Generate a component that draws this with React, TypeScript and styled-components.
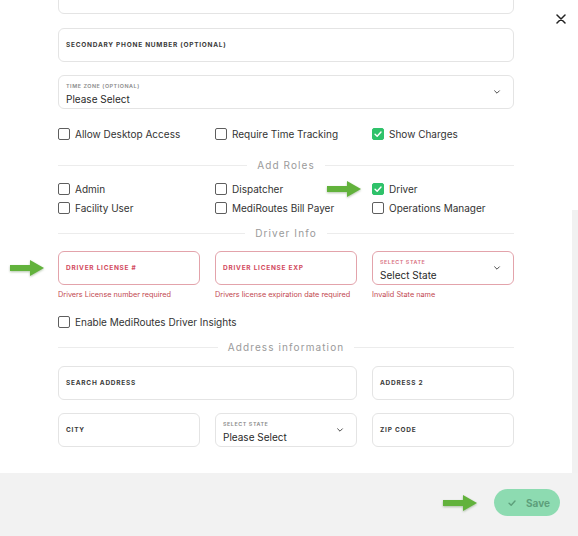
import React, { FunctionComponent } from "react";
import styled, { createGlobalStyle } from "styled-components";

const GlobalStyle = createGlobalStyle`
  html, body {
    margin: 0;
    padding: 0;
    background: #fff;
  }
  body {
    font-family: Inter, "Noto Sans", "Liberation Sans", sans-serif;
    color: #2f2f2f;
  }
`;

const Page = styled.div`
  position: relative;
  width: 578px;
  height: 536px;
  display: flex;
  flex-direction: column;
  overflow: hidden;
  background: #fff;
`;

const Body = styled.div`
  flex: 1;
  overflow: hidden;
  padding-left: 58px;
`;

const Form = styled.div`
  width: 456px;
  display: flex;
  flex-direction: column;
  margin-top: -20px;
`;

const Field = styled.div<{ error?: boolean; top?: number }>`
  box-sizing: border-box;
  height: 34px;
  margin-top: ${(p) => p.top ?? 0}px;
  border: 1px solid ${(p) => (p.error ? "#e3a3ab" : "#e4e4e4")};
  border-radius: 6px;
  background: #fff;
  display: flex;
  align-items: center;
  padding: 0 7px;
  position: relative;
`;

const FieldLabel = styled.span<{ error?: boolean }>`
  font-size: 6.5px;
  font-weight: 700;
  letter-spacing: 0.75px;
  text-transform: uppercase;
  color: ${(p) => (p.error ? "#d24a5e" : "#3a3a3a")};
`;

const SelectBody = styled.div`
  display: flex;
  flex-direction: column;
  flex: 1;
  gap: 4px;
  padding-top: 3px;
`;

const SmallLabel = styled.span<{ error?: boolean }>`
  font-size: 5.4px;
  font-weight: 600;
  letter-spacing: 0.55px;
  text-transform: uppercase;
  color: ${(p) => (p.error ? "#d8707f" : "#8a8a8a")};
`;

const SelectValue = styled.span`
  font-size: 10px;
  color: #2a2a2a;
`;

const Chevron = styled.svg`
  width: 8px;
  height: 8px;
  margin-right: 5px;
  flex-shrink: 0;
`;

const Grid = styled.div<{ top: number; rowGap?: number; wide?: boolean }>`
  display: grid;
  grid-template-columns: ${(p) => (p.wide ? "299px 142px" : "repeat(3, 142px)")};
  column-gap: 15px;
  row-gap: ${(p) => p.rowGap ?? 0}px;
  margin-top: ${(p) => p.top}px;
`;

const CheckRow = styled.label`
  display: flex;
  align-items: center;
  gap: 5px;
  height: 14px;
  font-size: 10px;
  color: #333;
  white-space: nowrap;
`;

const Box = styled.span<{ checked?: boolean }>`
  box-sizing: border-box;
  width: 12px;
  height: 12px;
  border-radius: 2px;
  border: 1px solid ${(p) => (p.checked ? "#2fc26a" : "#5e5e5e")};
  background: ${(p) => (p.checked ? "#2fc26a" : "#fff")};
  display: inline-flex;
  align-items: center;
  justify-content: center;
  flex-shrink: 0;
`;

const Divider = styled.div<{ top: number }>`
  display: flex;
  align-items: center;
  gap: 10px;
  height: 14px;
  margin-top: ${(p) => p.top}px;
  font-size: 10px;
  letter-spacing: 1.1px;
  color: #9a9a9a;
  &::before,
  &::after {
    content: "";
    flex: 1;
    height: 1px;
    background: #ececec;
  }
`;

const Cell = styled.div`
  display: flex;
  flex-direction: column;
  position: relative;
`;

const ErrorText = styled.span`
  margin-top: 5px;
  font-size: 7.3px;
  line-height: 10px;
  color: #c2474f;
  white-space: nowrap;
`;

const Single = styled.div<{ top: number }>`
  margin-top: ${(p) => p.top}px;
`;

const CloseButton = styled.button`
  position: absolute;
  top: 12px;
  right: 10px;
  width: 14px;
  height: 14px;
  padding: 0;
  border: 0;
  background: transparent;
  display: flex;
  align-items: center;
  justify-content: center;
`;

const ScrollTrack = styled.div`
  position: absolute;
  right: 0;
  top: 210px;
  width: 6px;
  height: 263px;
  background: #f1f1f1;
`;

const Footer = styled.div`
  height: 63px;
  background: #f2f2f2;
  display: flex;
  align-items: center;
  justify-content: flex-end;
  gap: 16px;
  padding-right: 18px;
  padding-bottom: 4px;
  box-sizing: border-box;
`;

const SaveButton = styled.button`
  height: 27px;
  width: 66px;
  border: 0;
  border-radius: 14px;
  background: #8ddbb1;
  color: #5d9f7b;
  font-family: Inter, "Liberation Sans", sans-serif;
  font-size: 10px;
  font-weight: 700;
  display: flex;
  align-items: center;
  justify-content: center;
  gap: 9px;
  padding: 0 0 0 3px;
`;

const Arrow = styled.svg`
  position: absolute;
  width: 36px;
  height: 18px;
  filter: drop-shadow(0 1px 1px rgba(40, 90, 20, 0.35));
`;

const FooterArrow = styled.svg`
  width: 36px;
  height: 18px;
  filter: drop-shadow(0 1px 1px rgba(40, 90, 20, 0.35));
`;

const ArrowShape = () => (
  <polygon
    points="1,6 21,6 21,1 35,9 21,17 21,12 1,12"
    fill="#62b23c"
  />
);

const CheckMark: FunctionComponent<{ color: string; size: number }> = ({
  color,
  size,
}) => (
  <svg width={size} height={size} viewBox="0 0 12 12">
    <path
      d="M2.5 6.3 L5 8.6 L9.6 3.6"
      fill="none"
      stroke={color}
      strokeWidth="1.7"
      strokeLinecap="round"
      strokeLinejoin="round"
    />
  </svg>
);

const DownChevron = () => (
  <Chevron viewBox="0 0 10 10">
    <path
      d="M2 3.5 L5 6.5 L8 3.5"
      fill="none"
      stroke="#444"
      strokeWidth="1.2"
      strokeLinecap="round"
    />
  </Chevron>
);

type CheckProps = { label: string; checked?: boolean };

const Check: FunctionComponent<CheckProps> = ({ label, checked }) => (
  <CheckRow>
    <Box checked={checked}>
      {checked && <CheckMark color="#fff" size={10} />}
    </Box>
    {label}
  </CheckRow>
);

const App = () => {
  return (
    <Page>
      <GlobalStyle />
      <Body>
        <Form>
          <Field />
          <Field top={14}>
            <FieldLabel>Secondary Phone Number (Optional)</FieldLabel>
          </Field>
          <Field top={13}>
            <SelectBody>
              <SmallLabel>Time Zone (Optional)</SmallLabel>
              <SelectValue>Please Select</SelectValue>
            </SelectBody>
            <DownChevron />
          </Field>

          <Grid top={18}>
            <Check label="Allow Desktop Access" />
            <Check label="Require Time Tracking" />
            <Check label="Show Charges" checked />
          </Grid>

          <Divider top={17}>Add Roles</Divider>

          <Grid top={10} rowGap={5}>
            <Check label="Admin" />
            <Check label="Dispatcher" />
            <Cell>
              <Arrow viewBox="0 0 36 18" style={{ left: -46, top: -2 }}>
                <ArrowShape />
              </Arrow>
              <Check label="Driver" checked />
            </Cell>
            <Check label="Facility User" />
            <Check label="MediRoutes Bill Payer" />
            <Check label="Operations Manager" />
          </Grid>

          <Divider top={11}>Driver Info</Divider>

          <Grid top={11}>
            <Cell>
              <Arrow viewBox="0 0 36 18" style={{ left: -49, top: 8 }}>
                <ArrowShape />
              </Arrow>
              <Field error>
                <FieldLabel error>Driver License #</FieldLabel>
              </Field>
              <ErrorText>Drivers License number required</ErrorText>
            </Cell>
            <Cell>
              <Field error>
                <FieldLabel error>Driver License Exp</FieldLabel>
              </Field>
              <ErrorText>Drivers license expiration date required</ErrorText>
            </Cell>
            <Cell>
              <Field error>
                <SelectBody>
                  <SmallLabel error>Select State</SmallLabel>
                  <SelectValue>Select State</SelectValue>
                </SelectBody>
                <DownChevron />
              </Field>
              <ErrorText>Invalid State name</ErrorText>
            </Cell>
          </Grid>

          <Single top={15}>
            <Check label="Enable MediRoutes Driver Insights" />
          </Single>

          <Divider top={11}>Address information</Divider>

          <Grid top={12} wide>
            <Field>
              <FieldLabel>Search Address</FieldLabel>
            </Field>
            <Field>
              <FieldLabel>Address 2</FieldLabel>
            </Field>
          </Grid>

          <Grid top={13}>
            <Field>
              <FieldLabel>City</FieldLabel>
            </Field>
            <Field>
              <SelectBody>
                <SmallLabel>Select State</SmallLabel>
                <SelectValue>Please Select</SelectValue>
              </SelectBody>
              <DownChevron />
            </Field>
            <Field>
              <FieldLabel>Zip Code</FieldLabel>
            </Field>
          </Grid>
        </Form>
      </Body>

      <CloseButton aria-label="Close">
        <svg width="10" height="10" viewBox="0 0 10 10">
          <path
            d="M1 1 L9 9 M9 1 L1 9"
            stroke="#222"
            strokeWidth="1.5"
            strokeLinecap="round"
          />
        </svg>
      </CloseButton>
      <ScrollTrack />

      <Footer>
        <FooterArrow viewBox="0 0 36 18">
          <ArrowShape />
        </FooterArrow>
        <SaveButton>
          <CheckMark color="#5d9f7b" size={10} />
          Save
        </SaveButton>
      </Footer>
    </Page>
  );
};

export default App;
